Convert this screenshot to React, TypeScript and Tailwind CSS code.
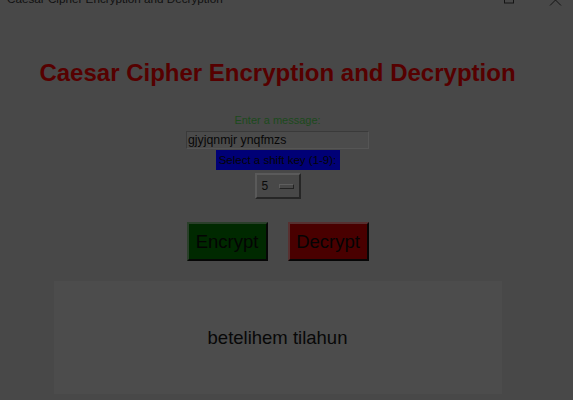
import React from "react";

export default function App() {
  return (
    <div
      className="w-[573px] h-[400px] bg-[#484848] overflow-hidden flex flex-col"
      style={{ fontFamily: '"Liberation Sans", Arial, sans-serif' }}
    >
      {/* title bar (mostly cut off) */}
      <div className="h-[15px] flex items-start shrink-0">
        <span className="ml-[7px] -mt-[8px] text-[11.7px] leading-[13px] text-[#101010] whitespace-nowrap">
          Caesar Cipher Encryption and Decryption
        </span>
        <svg className="ml-auto mr-[3px]" width="70" height="8" viewBox="0 0 70 8">
          <rect x="4.5" y="-7" width="9" height="10" fill="none" stroke="#141414" strokeWidth="1" />
          <path d="M50 5.5 L55.5 0 L61 5.5" fill="none" stroke="#141414" strokeWidth="1" />
        </svg>
      </div>

      <div className="w-[555px] flex flex-col items-center">
        <h1 className="mt-[44px] text-[24px] leading-[28px] font-bold text-[#560000] whitespace-nowrap">
          Caesar Cipher Encryption and Decryption
        </h1>

        <div className="mt-[27px] h-[13px] text-[11px] leading-[13px] text-[#1c4a1c]">
          Enter a message:
        </div>

        <div className="mt-[4px] w-[183px] h-[18px] bg-[#4b4b4b] border border-t-[#3a3a3a] border-l-[#3a3a3a] border-b-[#555555] border-r-[#555555] flex items-center pl-[1px]">
          <span className="text-[12.3px] leading-[16px] text-[#080808] whitespace-nowrap">
            gjyjqnmjr ynqfmzs
          </span>
        </div>

        <div className="mt-[1px] w-[124px] h-[20px] bg-[#000076] flex items-center justify-center">
          <span className="text-[11.5px] leading-[14px] text-[#050505] whitespace-nowrap">
            Select a shift key (1-9):
          </span>
        </div>

        <div className="mt-[3px] w-[46px] h-[26px] border-2 border-t-[#5a5a5a] border-l-[#5a5a5a] border-b-[#262626] border-r-[#262626] flex items-center">
          <span className="ml-[5px] text-[12px] leading-[14px] text-[#0a0a0a]">5</span>
          <div className="ml-[11px] w-[15px] h-[5px] border border-t-[#5e5e5e] border-l-[#5e5e5e] border-b-[#222222] border-r-[#222222]" />
        </div>

        <div className="mt-[23px] flex gap-[20px]">
          <div className="w-[81px] h-[39px] bg-[#002900] border-2 border-t-[#2a3f2a] border-l-[#2a3f2a] border-b-[#060606] border-r-[#060606] flex items-center justify-center">
            <span className="text-[18.5px] leading-[22px] text-[#040404]">Encrypt</span>
          </div>
          <div className="w-[81px] h-[39px] bg-[#490000] border-2 border-t-[#573030] border-l-[#573030] border-b-[#060606] border-r-[#060606] flex items-center justify-center">
            <span className="text-[18.5px] leading-[22px] text-[#040404]">Decrypt</span>
          </div>
        </div>

        <div className="mt-[20px] w-[448px] h-[113px] bg-[#4c4c4c] flex items-center justify-center">
          <span className="text-[18.5px] leading-[22px] text-[#080808] whitespace-nowrap">
            betelihem tilahun
          </span>
        </div>
      </div>
    </div>
  );
}
